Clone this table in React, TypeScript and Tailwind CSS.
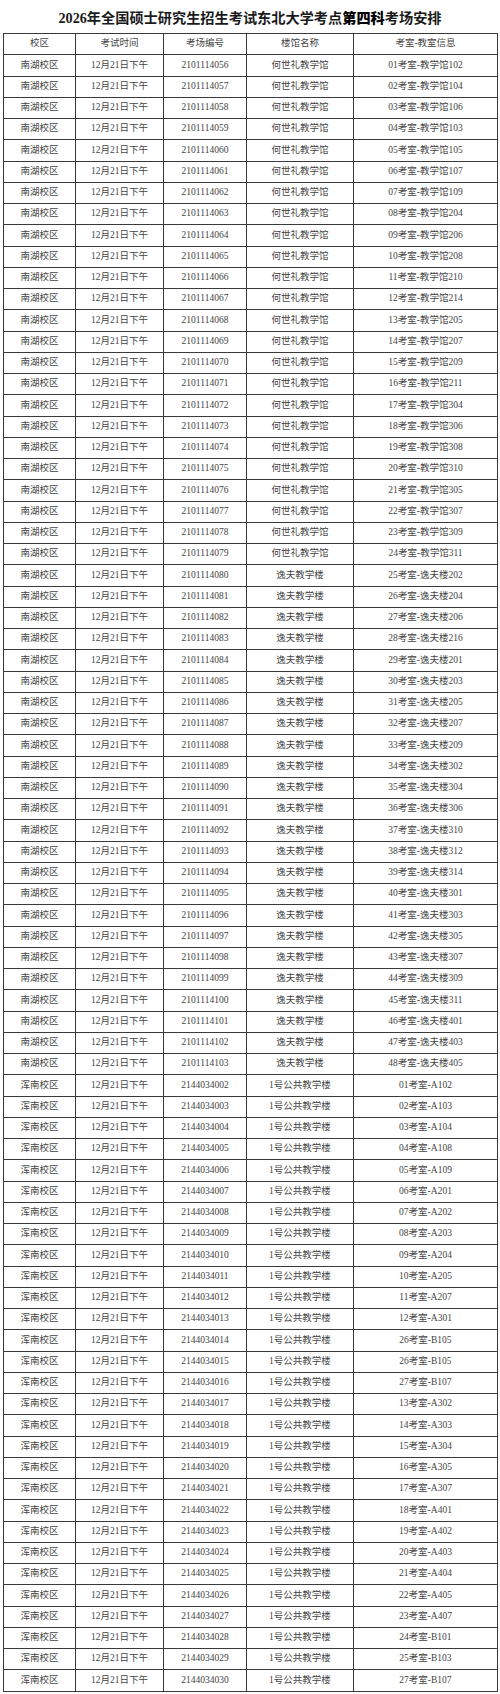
type Row = [string, string, string, string];

const nanhuRooms: Array<[string, string]> = [
    ["何世礼教学馆", "教学馆102"], ["何世礼教学馆", "教学馆104"], ["何世礼教学馆", "教学馆106"],
    ["何世礼教学馆", "教学馆103"], ["何世礼教学馆", "教学馆105"], ["何世礼教学馆", "教学馆107"],
    ["何世礼教学馆", "教学馆109"], ["何世礼教学馆", "教学馆204"], ["何世礼教学馆", "教学馆206"],
    ["何世礼教学馆", "教学馆208"], ["何世礼教学馆", "教学馆210"], ["何世礼教学馆", "教学馆214"],
    ["何世礼教学馆", "教学馆205"], ["何世礼教学馆", "教学馆207"], ["何世礼教学馆", "教学馆209"],
    ["何世礼教学馆", "教学馆211"], ["何世礼教学馆", "教学馆304"], ["何世礼教学馆", "教学馆306"],
    ["何世礼教学馆", "教学馆308"], ["何世礼教学馆", "教学馆310"], ["何世礼教学馆", "教学馆305"],
    ["何世礼教学馆", "教学馆307"], ["何世礼教学馆", "教学馆309"], ["何世礼教学馆", "教学馆311"],
    ["逸夫教学楼", "逸夫楼202"], ["逸夫教学楼", "逸夫楼204"], ["逸夫教学楼", "逸夫楼206"],
    ["逸夫教学楼", "逸夫楼216"], ["逸夫教学楼", "逸夫楼201"], ["逸夫教学楼", "逸夫楼203"],
    ["逸夫教学楼", "逸夫楼205"], ["逸夫教学楼", "逸夫楼207"], ["逸夫教学楼", "逸夫楼209"],
    ["逸夫教学楼", "逸夫楼302"], ["逸夫教学楼", "逸夫楼304"], ["逸夫教学楼", "逸夫楼306"],
    ["逸夫教学楼", "逸夫楼310"], ["逸夫教学楼", "逸夫楼312"], ["逸夫教学楼", "逸夫楼314"],
    ["逸夫教学楼", "逸夫楼301"], ["逸夫教学楼", "逸夫楼303"], ["逸夫教学楼", "逸夫楼305"],
    ["逸夫教学楼", "逸夫楼307"], ["逸夫教学楼", "逸夫楼309"], ["逸夫教学楼", "逸夫楼311"],
    ["逸夫教学楼", "逸夫楼401"], ["逸夫教学楼", "逸夫楼403"], ["逸夫教学楼", "逸夫楼405"],
];

const hunnanRooms: Array<[string, string]> = [
    ["01", "A102"], ["02", "A103"], ["03", "A104"], ["04", "A108"], ["05", "A109"],
    ["06", "A201"], ["07", "A202"], ["08", "A203"], ["09", "A204"], ["10", "A205"],
    ["11", "A207"], ["12", "A301"], ["26", "B105"], ["26", "B105"], ["27", "B107"],
    ["13", "A302"], ["14", "A303"], ["15", "A304"], ["16", "A305"], ["17", "A307"],
    ["18", "A401"], ["19", "A402"], ["20", "A403"], ["21", "A404"], ["22", "A405"],
    ["23", "A407"], ["24", "B101"], ["25", "B103"], ["27", "B107"],
];

const rows: Row[] = [
    ...nanhuRooms.map(([hall, room], i): Row => [
        "南湖校区",
        String(2101114056 + i),
        hall,
        `${String(i + 1).padStart(2, "0")}考室-${room}`,
    ]),
    ...hunnanRooms.map(([no, room], i): Row => [
        "浑南校区",
        String(2144034002 + i),
        "1号公共教学楼",
        `${no}考室-${room}`,
    ]),
];

const cell = "border border-[#3a3a3a] p-0 text-center align-middle";

export default function App() {
    return (
        <div
            className="w-[500px] bg-white pb-[3px] text-[#444]"
            style={{ fontFamily: '"Liberation Serif", "Noto Sans CJK SC", serif' }}
        >
            <h1 className="flex h-[33px] items-center justify-center pt-[3px] text-[14.2px] font-semibold leading-none text-[#1a1a1a]">
                2026年全国硕士研究生招生考试东北大学考点
                <span className="font-black text-black">第四科</span>
                考场安排
            </h1>
            <table className="ml-[3px] w-[494px] table-fixed border-collapse text-[9.5px] leading-none">
                <colgroup>
                    <col className="w-[72px]" />
                    <col className="w-[88px]" />
                    <col className="w-[83px]" />
                    <col className="w-[107px]" />
                    <col className="w-[144px]" />
                </colgroup>
                <thead>
                    <tr className="h-[21.25px]">
                        <th className={`${cell} font-normal`}>校区</th>
                        <th className={`${cell} font-normal`}>考试时间</th>
                        <th className={`${cell} font-normal`}>考场编号</th>
                        <th className={`${cell} font-normal`}>楼馆名称</th>
                        <th className={`${cell} font-normal`}>考室-教室信息</th>
                    </tr>
                </thead>
                <tbody>
                    {rows.map(([campus, code, hall, room], i) => (
                        <tr key={i} className="h-[21.25px]">
                            <td className={cell}>{campus}</td>
                            <td className={cell}>12月21日下午</td>
                            <td className={cell}>{code}</td>
                            <td className={cell}>{hall}</td>
                            <td className={cell}>{room}</td>
                        </tr>
                    ))}
                </tbody>
            </table>
        </div>
    );
}
